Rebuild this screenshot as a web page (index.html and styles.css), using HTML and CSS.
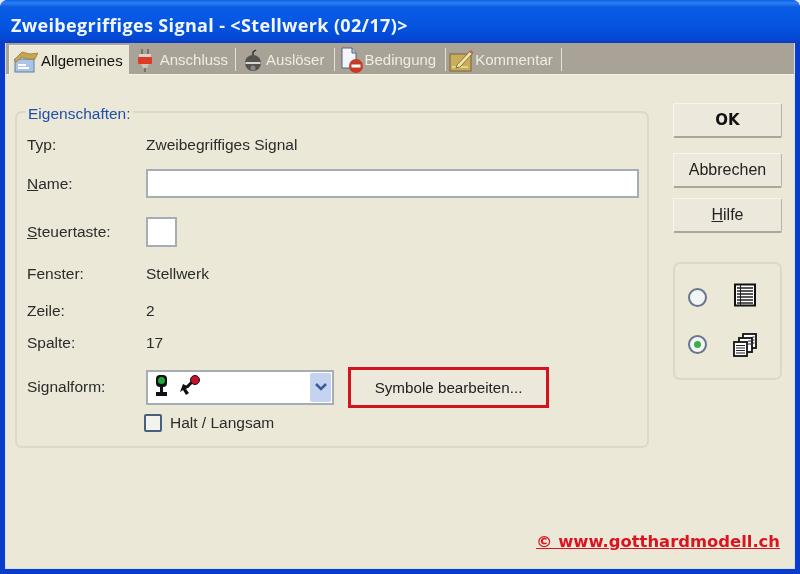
FILE: index.html
```html
<!DOCTYPE html>
<html lang="de">
<head>
  <meta charset="UTF-8" />
  <title>Zweibegriffiges Signal</title>
  <link rel="stylesheet" href="styles.css">
</head>
<body>
  <div class="fenster">
    <div class="titelleiste">Zweibegriffiges Signal - &lt;Stellwerk (02/17)&gt;</div>

    <div class="inhalt">
      <div class="tabs">
        <div class="tab aktiv">
          <svg width="24" height="24" viewBox="0 0 24 24"><rect x="1" y="10" width="19" height="13" fill="#a9c4e4" stroke="#5f7fa8"/><rect x="4" y="15" width="8" height="2" fill="#fff"/><rect x="4" y="18" width="11" height="2" fill="#fff"/><path d="M0 11 L8 3 L16 5 L24 4 L21 10 L13 10 L8 8 L2 13 Z" fill="#c9a64e" stroke="#8a7434" stroke-width=".7"/></svg>
          Allgemeines
        </div>
        <div class="tab t-anschluss">
          <svg width="20" height="24" viewBox="0 0 20 24"><path d="M7 1v6M13 1v6" stroke="#77736a" stroke-width="2"/><rect x="4" y="6" width="12" height="4" fill="#d9d5cc"/><rect x="3" y="9" width="14" height="7" rx="1" fill="#df3a26"/><path d="M6 16h8l-2 4h-4z" fill="#c9c5ba"/><path d="M10 20v4" stroke="#77736a" stroke-width="2"/></svg>
          Anschluss
        </div>
        <div class="tab t-ausloeser">
          <svg width="20" height="24" viewBox="0 0 20 24"><path d="M10 9V4l3-2" fill="none" stroke="#333" stroke-width="1.500"/><circle cx="10" cy="15" r="8" fill="#55534f"/><path d="M2.500 14h15v2h-15z" fill="#d8d6d0"/><circle cx="10" cy="20" r="2.500" fill="#888"/></svg>
          Auslöser
        </div>
        <div class="tab t-bedingung">
          <svg width="24" height="26" viewBox="0 0 24 26"><path d="M2 1h10l4 5v15H2z" fill="#f4f6fb" stroke="#55617a"/><path d="M12 1v5h4" fill="#b9c6de" stroke="#55617a"/><circle cx="16" cy="19" r="7" fill="#c83a22"/><rect x="11.500" y="17.500" width="9" height="3" fill="#fff"/></svg>
          Bedingung
        </div>
        <div class="tab t-kommentar">
          <svg width="25" height="24" viewBox="0 0 25 24"><rect x="1" y="6" width="21" height="17" fill="#c9ac5c" stroke="#7c6730"/><path d="M3 19 L19 19" stroke="#fff4c0"/><path d="M8 17 L21 3 L24 5 L11 19 L7 20 Z" fill="#efe3a8" stroke="#6f5d2b" stroke-width=".8"/><path d="M20 4l2-2 2 2-1 2z" fill="#c9605a"/></svg>
          Kommentar
        </div>
      </div>

      <div class="haupt">
        <fieldset class="eigenschaften">
          <legend>Eigenschaften:</legend>
          <div class="zeile z-typ"><span class="label">Typ:</span><span>Zweibegriffiges Signal</span></div>
          <div class="zeile z-name"><span class="label"><u>N</u>ame:</span><div class="eingabe breit"></div></div>
          <div class="zeile z-taste"><span class="label"><u>S</u>teuertaste:</span><div class="eingabe taste"></div></div>
          <div class="zeile z-fenster"><span class="label">Fenster:</span><span>Stellwerk</span></div>
          <div class="zeile z-zeile"><span class="label">Zeile:</span><span>2</span></div>
          <div class="zeile z-spalte"><span class="label">Spalte:</span><span>17</span></div>
          <div class="zeile z-form">
            <span class="label">Signalform:</span>
            <div class="auswahl">
              <svg width="60" height="24" viewBox="0 0 60 24"><rect x="7" y="0" width="11" height="12" rx="4" fill="#111"/><circle cx="12.500" cy="5.500" r="3.500" fill="#1fa83c"/><rect x="11" y="11" width="3" height="7" fill="#111"/><path d="M7 17h11v4H7z" fill="#111"/><path d="M34 9l6 3-3 2 3 4-3 2-3-5-3 2z" fill="#111"/><path d="M38 12l5-5" stroke="#111" stroke-width="3"/><circle cx="46" cy="5" r="4.500" fill="#c8102e" stroke="#111"/></svg>
              <div class="pfeil"><svg width="14" height="10" viewBox="0 0 14 10"><path d="M2 2l5 5 5-5" fill="none" stroke="#3d5a9c" stroke-width="2.500"/></svg></div>
            </div>
            <button class="knopf symbole">Symbole bearbeiten...</button>
          </div>
          <div class="zeile z-halt"><span class="label"></span><span class="haken"></span><span>Halt / Langsam</span></div>
        </fieldset>

        <div class="rechts">
          <button class="knopf ok">OK</button>
          <button class="knopf">Abbrechen</button>
          <button class="knopf"><u>H</u>ilfe</button>
          <div class="ansicht">
            <div class="ansicht-zeile">
              <span class="radio"></span>
              <svg class="icon-liste" width="24" height="24" viewBox="0 0 24 24"><rect x="2" y="1.500" width="20" height="21" fill="#fff" stroke="#111" stroke-width="2"/><path d="M4 5h16M4 8h16M4 11h16M4 14h16M4 17h16M4 20h16" stroke="#222" stroke-width="1.300"/><path d="M7.500 2v20" stroke="#222"/></svg>
            </div>
            <div class="ansicht-zeile">
              <span class="radio an"></span>
              <svg width="24" height="24" viewBox="0 0 24 24"><rect x="10" y="1" width="13" height="14" fill="#fff" stroke="#111" stroke-width="1.800"/><rect x="6" y="5" width="13" height="14" fill="#fff" stroke="#111" stroke-width="1.800"/><rect x="1" y="9" width="13" height="14" fill="#fff" stroke="#111" stroke-width="1.800"/><path d="M3 12.500h9M3 15h9M3 17.500h9M3 20h9" stroke="#222" stroke-width="1.200"/><path d="M15 8h3M15 11h3M19.500 4h2M19.500 7h2M19.500 10h2" stroke="#222"/></svg>
            </div>
          </div>
        </div>
      </div>

      <div class="fuss"><a class="copy">© www.gotthardmodell.ch</a></div>
    </div>
  </div>
</body>
</html>
```

FILE: styles.css
```css
html, body {
  margin: 0;
  padding: 0;
}

body {
  width: 800px;
  height: 574px;
  overflow: hidden;
  background: #dfe6f5;
  font-family: "Liberation Sans", Arial, sans-serif;
  font-size: 15.5px;
  color: #2b2b2b;
}

.fenster {
  height: 574px;
  display: flex;
  flex-direction: column;
  border-radius: 8px 8px 0 0;
  overflow: hidden;
  background: #0a3ccb;
  filter: blur(0.4px);
}

.titelleiste {
  height: 43px;
  flex: none;
  box-sizing: border-box;
  padding: 15px 0 0 11px;
  background: linear-gradient(to bottom, #0f5fe8 0, #2a80ef 3px, #0a5ce4 7px, #0454e0 26px, #0348d4 38px, #0a3cc0 43px);
  color: #f2f6ff;
  font-family: "Open Sans", sans-serif;
  font-weight: 700;
  font-size: 18px;
  letter-spacing: 0.35px;
  line-height: 20px;
  white-space: nowrap;
}

.inhalt {
  flex: 1;
  display: flex;
  flex-direction: column;
  margin: 0 5px 5px;
  background: #ebe8d8;
  border-left: 1px solid #cfe0f8;
  border-right: 1px solid #cfe0f8;
  border-bottom: 1px solid #cfe0f8;
  position: relative;
}

/* Tabs */
.tabs {
  height: 31px;
  display: flex;
  background: #a8a396;
  border-bottom: 1px solid #f6f3e6;
  padding-left: 3px;
  color: #efece2;
  font-size: 15px;
}

.tab {
  display: flex;
  align-items: center;
  position: relative;
  white-space: nowrap;
  padding-top: 2px;
}

.tab::after {
  content: "";
  position: absolute;
  right: 0;
  top: 5px;
  bottom: 3px;
  width: 1px;
  background: #e6e3d6;
}

.t-anschluss { gap: 5px; padding-left: 6px; padding-right: 8px; }
.t-ausloeser { gap: 3px; padding-left: 7px; padding-right: 11px; }
.t-bedingung { gap: 0; padding-left: 5px; padding-right: 10px; }
.t-kommentar { gap: 1px; padding-left: 3px; padding-right: 9px; }

.tab.aktiv {
  background: #ebe8d8;
  color: #111;
  margin-top: 2px;
  margin-bottom: -1px;
  padding: 0 6px 0 4px;
  gap: 3px;
  border-top: 1px solid #f6f3e6;
  border-left: 1px solid #f6f3e6;
}

.tab.aktiv::after {
  display: none;
}

/* Hauptbereich */
.haupt {
  display: flex;
  padding-top: 28px;
}

.eigenschaften {
  width: 634px;
  height: 345px;
  box-sizing: border-box;
  margin: 0 0 0 9px;
  padding: 0 8px 0 10px;
  border: 2px solid #dcd9c8;
  border-radius: 7px;
}

.eigenschaften legend {
  position: relative;
  top: 2px;
  color: #1f4fa8;
  padding: 0 2px;
  margin-left: -1px;
  line-height: 18px;
}

.zeile {
  display: flex;
  align-items: center;
}

.label {
  width: 119px;
  flex: none;
}

.z-typ { height: 20px; margin-top: 14px; }
.z-name { height: 29px; margin-top: 14px; }
.z-taste { height: 30px; margin-top: 19px; }
.z-fenster { height: 20px; margin-top: 17px; }
.z-zeile { height: 20px; margin-top: 17px; }
.z-spalte { height: 20px; margin-top: 12px; }
.z-form { height: 40px; margin-top: 14px; }
.z-halt { height: 20px; margin-top: 6px; }

.eingabe {
  box-sizing: border-box;
  height: 100%;
  background: #fff;
  border: 2px solid #a5aeb5;
}

.breit { width: 493px; }
.taste { width: 31px; }

.auswahl {
  box-sizing: border-box;
  width: 188px;
  height: 35px;
  display: flex;
  align-items: center;
  justify-content: space-between;
  background: #fff;
  border: 2px solid #a5aeb5;
  padding: 0 1px;
}

.pfeil {
  width: 21px;
  height: 29px;
  display: flex;
  align-items: center;
  justify-content: center;
  background: #c4d3f0;
  border-radius: 2px;
}

.knopf {
  box-sizing: border-box;
  width: 109px;
  height: 35px;
  padding: 0;
  font: inherit;
  font-size: 16px;
  color: #222;
  background: #ece9dc;
  border: 1px solid #f7f5ec;
  border-right-color: #b8b5a6;
  border-bottom: 2px solid #aaa797;
  border-radius: 2px;
}

.knopf.symbole {
  width: 201px;
  height: 41px;
  margin-left: 14px;
  font-size: 15.2px;
  border: 3px solid #d4141c;
  border-radius: 0;
}

.knopf.ok {
  font-family: "DejaVu Sans", sans-serif;
  font-weight: 700;
  font-size: 15px;
  color: #111;
  margin-bottom: 5px;
}

.haken {
  box-sizing: border-box;
  width: 18px;
  height: 18px;
  margin-left: -2px;
  margin-right: 8px;
  background: #f3f3ee;
  border: 2px solid #46607f;
  border-radius: 2px;
}

/* rechte Spalte */
.rechts {
  width: 109px;
  margin-left: 24px;
  display: flex;
  flex-direction: column;
  gap: 10px;
}

.ansicht {
  box-sizing: border-box;
  height: 118px;
  margin-top: 19px;
  border: 2px solid #dcd9c8;
  border-radius: 7px;
  display: flex;
  flex-direction: column;
  justify-content: center;
  gap: 23px;
  padding-left: 13px;
}

.ansicht-zeile {
  height: 24px;
  display: flex;
  align-items: center;
  gap: 26px;
}

.icon-liste {
  margin-bottom: 6px;
}

.radio {
  box-sizing: border-box;
  width: 19px;
  height: 19px;
  border-radius: 50%;
  background: #f2f5f6;
  border: 2px solid #66778a;
  display: flex;
  align-items: center;
  justify-content: center;
}

.radio.an::after {
  content: "";
  width: 7px;
  height: 7px;
  border-radius: 50%;
  background: #3fae48;
}

/* Fuss */
.fuss {
  position: absolute;
  right: 14px;
  bottom: 17px;
}

.copy {
  color: #dc1420;
  font-family: "DejaVu Sans", sans-serif;
  font-weight: 700;
  font-size: 16.4px;
  text-decoration: underline;
}
```
